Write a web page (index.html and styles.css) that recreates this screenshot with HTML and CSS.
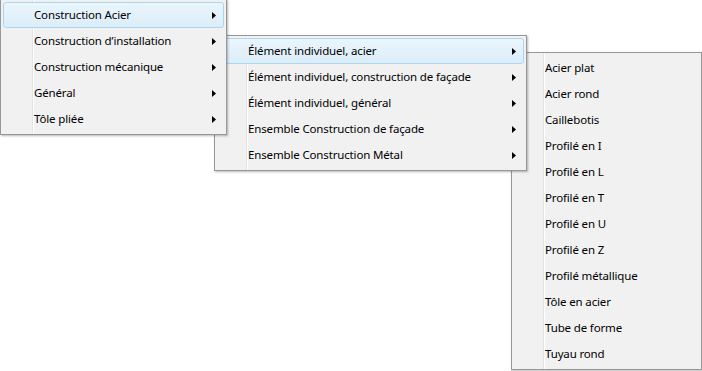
FILE: index.html
```html
<!DOCTYPE html>
<html>
<head>
<meta charset="utf-8">
<link rel="stylesheet" href="styles.css">
</head>
<body>
<div class="canvas">
  <div class="menu menu-1">
    <div class="item active"><span class="label">Construction Acier</span><svg class="arrow" width="4" height="7" viewBox="0 0 4 7"><path d="M0 0L4 3.5L0 7Z"/></svg></div>
    <div class="item"><span class="label">Construction d’installation</span><svg class="arrow" width="4" height="7" viewBox="0 0 4 7"><path d="M0 0L4 3.5L0 7Z"/></svg></div>
    <div class="item"><span class="label">Construction mécanique</span><svg class="arrow" width="4" height="7" viewBox="0 0 4 7"><path d="M0 0L4 3.5L0 7Z"/></svg></div>
    <div class="item"><span class="label">Général</span><svg class="arrow" width="4" height="7" viewBox="0 0 4 7"><path d="M0 0L4 3.5L0 7Z"/></svg></div>
    <div class="item"><span class="label">Tôle pliée</span><svg class="arrow" width="4" height="7" viewBox="0 0 4 7"><path d="M0 0L4 3.5L0 7Z"/></svg></div>
  </div>
  <div class="menu menu-2">
    <div class="item active"><span class="label">Élément individuel, acier</span><svg class="arrow" width="4" height="7" viewBox="0 0 4 7"><path d="M0 0L4 3.5L0 7Z"/></svg></div>
    <div class="item"><span class="label">Élément individuel, construction de façade</span><svg class="arrow" width="4" height="7" viewBox="0 0 4 7"><path d="M0 0L4 3.5L0 7Z"/></svg></div>
    <div class="item"><span class="label">Élément individuel, général</span><svg class="arrow" width="4" height="7" viewBox="0 0 4 7"><path d="M0 0L4 3.5L0 7Z"/></svg></div>
    <div class="item"><span class="label">Ensemble Construction de façade</span><svg class="arrow" width="4" height="7" viewBox="0 0 4 7"><path d="M0 0L4 3.5L0 7Z"/></svg></div>
    <div class="item"><span class="label">Ensemble Construction Métal</span><svg class="arrow" width="4" height="7" viewBox="0 0 4 7"><path d="M0 0L4 3.5L0 7Z"/></svg></div>
  </div>
  <div class="menu menu-3">
    <div class="item"><span class="label">Acier plat</span></div>
    <div class="item"><span class="label">Acier rond</span></div>
    <div class="item"><span class="label">Caillebotis</span></div>
    <div class="item"><span class="label">Profilé en I</span></div>
    <div class="item"><span class="label">Profilé en L</span></div>
    <div class="item"><span class="label">Profilé en T</span></div>
    <div class="item"><span class="label">Profilé en U</span></div>
    <div class="item"><span class="label">Profilé en Z</span></div>
    <div class="item"><span class="label">Profilé métallique</span></div>
    <div class="item"><span class="label">Tôle en acier</span></div>
    <div class="item"><span class="label">Tube de forme</span></div>
    <div class="item"><span class="label">Tuyau rond</span></div>
  </div>
</div>
</body>
</html>
```
FILE: styles.css
```css
html, body {
  margin: 0;
  padding: 0;
  background: #ffffff;
}
.canvas {
  position: relative;
  width: 702px;
  height: 371px;
  overflow: hidden;
  font-family: "Noto Sans", "Open Sans", sans-serif;
  font-size: 11.5px;
  letter-spacing: -0.15px;
  color: #000;
}
.menu {
  position: absolute;
  box-sizing: border-box;
  border: 1px solid #979797;
  padding: 2px;
  display: flex;
  flex-direction: column;
  background-color: #f1f1f1;
  box-shadow: 1px 1px 2px rgba(0, 0, 0, 0.28);
}
.menu::before {
  content: "";
  position: absolute;
  top: 0;
  bottom: 0;
  left: 31px;
  width: 1px;
  background: #e2e3e3;
  border-right: 1px solid #ffffff;
}
.menu-1 {
  left: 0;
  top: -1px;
  width: 227px;
  z-index: 3;
}
.menu-2 {
  left: 214px;
  top: 35px;
  width: 313px;
  z-index: 2;
}
.menu-3 {
  left: 511px;
  top: 52px;
  width: 191px;
  z-index: 1;
}
.item {
  position: relative;
  z-index: 1;
  box-sizing: border-box;
  height: 26px;
  display: flex;
  align-items: center;
  padding-left: 30px;
  padding-right: 7px;
  padding-bottom: 2px;
  border: 1px solid transparent;
  border-radius: 3px;
}
.item.active {
  border-color: #a8d8ef;
  background: linear-gradient(#eaf5fc, #dcedf9);
}
.label {
  flex: 1;
  white-space: nowrap;
}
.arrow {
  flex: none;
  fill: #000;
  margin-top: 2px;
}
```
